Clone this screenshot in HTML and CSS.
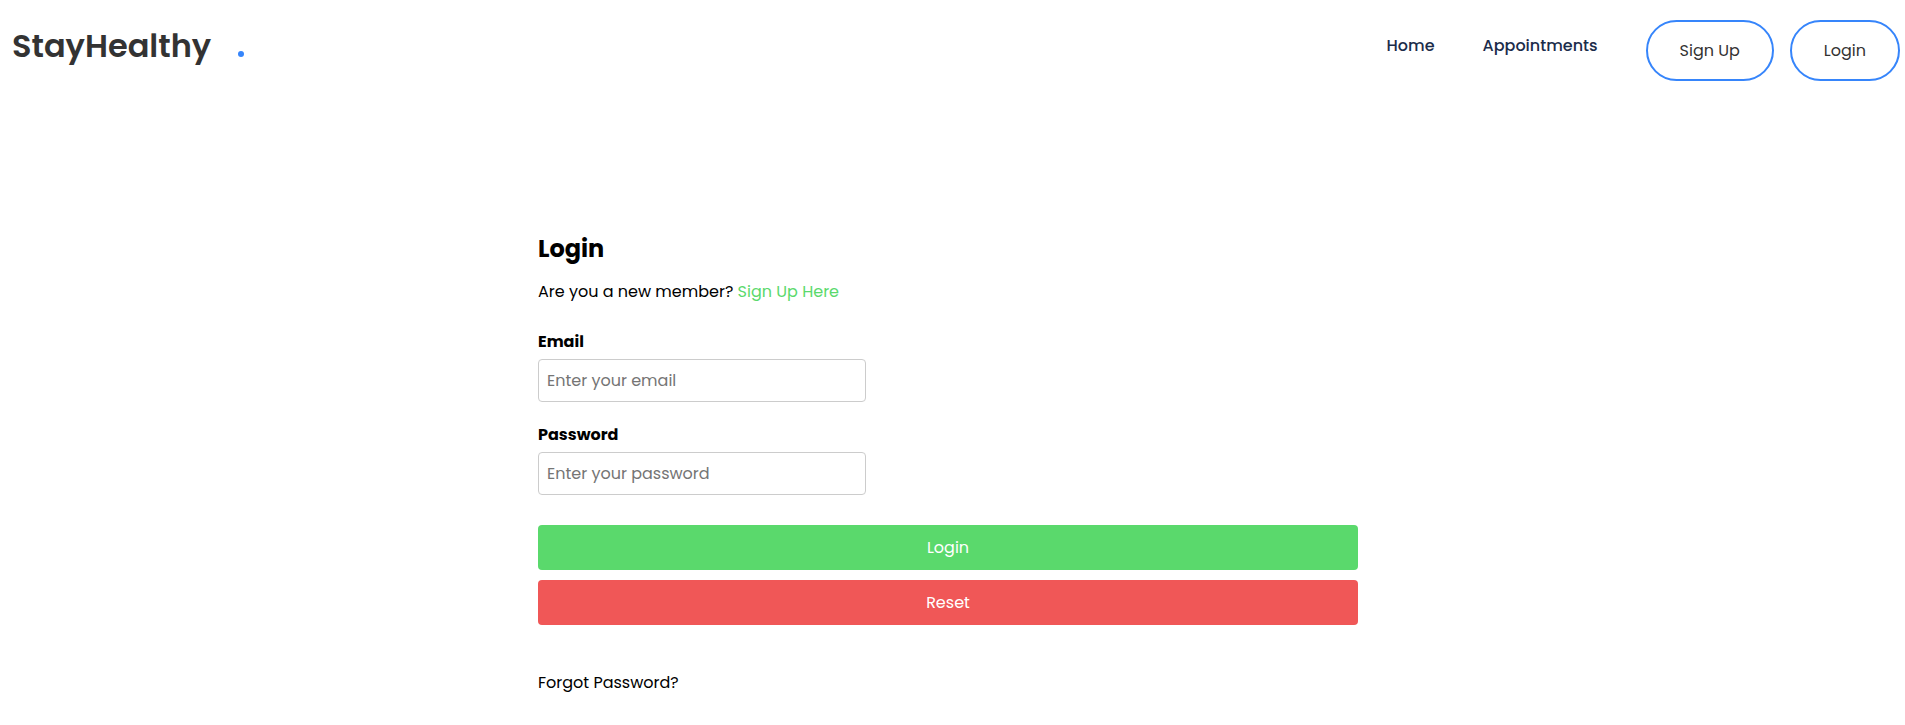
FILE: index.html
```html
<!DOCTYPE html>
<html lang="en">
<head>
<meta charset="utf-8">
<meta name="viewport" content="width=device-width, initial-scale=1">
<title>StayHealthy - Login</title>
<link rel="stylesheet" href="styles.css">
</head>
<body>
<header class="navbar">
  <a class="logo" href="#">StayHealthy<span class="logo-dot" aria-hidden="true"></span></a>
  <nav class="nav-menu" aria-label="Main">
    <a class="nav-link" href="#">Home</a>
    <a class="nav-link" href="#">Appointments</a>
    <div class="nav-actions">
      <button class="pill" type="button">Sign Up</button>
      <button class="pill" type="button">Login</button>
    </div>
  </nav>
</header>
<main class="page">
  <section class="login">
    <h1 class="title">Login</h1>
    <p class="intro">Are you a new member? <a class="signup-link" href="#">Sign Up Here</a></p>
    <form class="form">
      <div class="field">
        <label class="label" for="email">Email</label>
        <input class="input" id="email" type="email" placeholder="Enter your email">
      </div>
      <div class="field">
        <label class="label" for="password">Password</label>
        <input class="input" id="password" type="password" placeholder="Enter your password">
      </div>
      <div class="buttons">
        <button class="btn btn-login" type="submit">Login</button>
        <button class="btn btn-reset" type="reset">Reset</button>
      </div>
    </form>
    <a class="forgot" href="#">Forgot Password?</a>
  </section>
</main>
</body>
</html>
```

FILE: styles.css
```css
* {
  box-sizing: border-box;
}

body {
  margin: 0;
  background: #fff;
  color: #000;
  font-family: Poppins, Inter, sans-serif;
  font-size: 16px;
  line-height: 24px;
}

a {
  color: inherit;
  text-decoration: none;
}

button,
input {
  font: inherit;
}

.navbar {
  display: flex;
  justify-content: space-between;
  align-items: flex-start;
  padding: 20px 5px 20px 12px;
}

.logo {
  display: flex;
  align-items: baseline;
  gap: 27px;
  color: #333;
  font-size: 32px;
  font-weight: 600;
  line-height: 52px;
}

.logo-dot {
  width: 6px;
  height: 6px;
  border-radius: 50%;
  background: #3685fb;
}

.nav-menu {
  display: flex;
  align-items: flex-start;
  gap: 48px;
}

.nav-link {
  padding-top: 14px;
  color: #1b2c4a;
  font-weight: 500;
}

.nav-actions {
  display: flex;
  gap: 16px;
}

.pill {
  padding: 16px 32px;
  border: 2px solid #3685fb;
  border-radius: 32px;
  background: #fff;
  color: #333;
  line-height: 25px;
}

.page {
  display: flex;
  justify-content: center;
  padding: 132px 9px 24px 0;
}

.login {
  width: 100%;
  max-width: 820px;
}

.title {
  margin: 0 0 15px;
  font-size: 24px;
  font-weight: 700;
  line-height: 32px;
}

.intro {
  margin: 0 0 26px;
}

.signup-link {
  color: #5ad96c;
}

.form {
  display: flex;
  flex-direction: column;
  gap: 21px;
}

.field {
  display: flex;
  flex-direction: column;
  gap: 5px;
}

.label {
  font-weight: 700;
}

.input {
  width: 40%;
  padding: 8px;
  border: 1px solid #ccc;
  border-radius: 4px;
  line-height: 25px;
}

.input::placeholder {
  color: #757575;
}

.buttons {
  display: flex;
  flex-direction: column;
  gap: 10px;
  padding-top: 9px;
}

.btn {
  padding: 10px;
  border: 0;
  border-radius: 4px;
  color: #fff;
  line-height: 25px;
}

.btn-login {
  background: #5ad96c;
}

.btn-reset {
  background: #f05757;
}

.forgot {
  display: inline-block;
  margin-top: 46px;
}
```
